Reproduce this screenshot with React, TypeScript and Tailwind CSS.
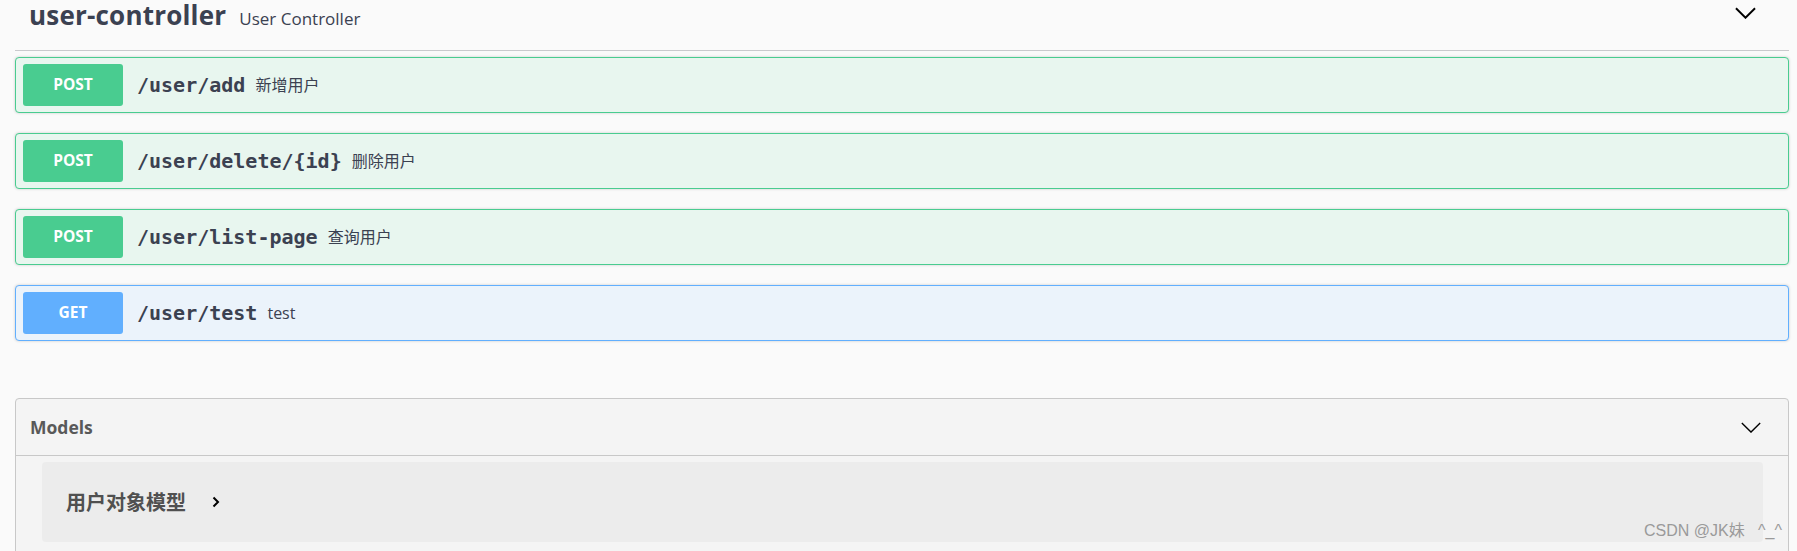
import React from "react";

interface Endpoint {
  method: "POST" | "GET";
  path: string;
  summary: string;
}

const endpoints: Endpoint[] = [
  { method: "POST", path: "/user/add", summary: "新增用户" },
  { method: "POST", path: "/user/delete/{id}", summary: "删除用户" },
  { method: "POST", path: "/user/list-page", summary: "查询用户" },
  { method: "GET", path: "/user/test", summary: "test" },
];

const sans = "font-['Open_Sans','Noto_Sans_CJK_SC',sans-serif]";

const Chevron = ({ className, width = 2 }: { className?: string; width?: number }) => (
  <svg className={className} viewBox="0 0 22 12" fill="none" stroke="currentColor">
    <path d="M1 1l10 10L21 1" strokeWidth={width} />
  </svg>
);

const OpBlock: React.FC<{ op: Endpoint }> = ({ op }) => {
  const isPost = op.method === "POST";
  return (
    <div
      className={`flex items-center h-[56px] rounded-[4px] border pl-[7px] shadow-[0_0_3px_rgba(0,0,0,0.19)] ${
        isPost ? "border-[#49cc90] bg-[#e8f6ef]" : "border-[#61affe] bg-[#ebf3fb]"
      }`}
    >
      <span
        className={`flex items-center justify-center w-[100px] h-[42px] rounded-[3px] text-white font-bold text-[15.5px] ${sans} ${
          isPost ? "bg-[#49cc90]" : "bg-[#61affe]"
        }`}
      >
        {op.method}
      </span>
      <span className="pl-[14px] text-[20px] font-bold text-[#3b4151] font-['DejaVu_Sans_Mono',monospace]">
        {op.path}
      </span>
      <span className={`pl-[10px] text-[16px] text-[#3b4151] ${sans}`}>{op.summary}</span>
    </div>
  );
};

export default function App() {
  return (
    <div className="relative h-[551px] overflow-hidden bg-[#fafafa] pl-[15px] pr-[8px]">
      {/* tag header */}
      <div className="flex items-start justify-between h-[51px] border-b border-[#c9cacd] pl-[14px] pr-[33px]">
        <div className="flex items-baseline gap-[13px] mt-[2px]">
          <span className={`text-[26px] font-bold text-[#3b4151] leading-none tracking-[0.2px] ${sans}`}>
            user-controller
          </span>
          <span className={`text-[17px] text-[#3b4151] leading-none ${sans}`}>User Controller</span>
        </div>
        <Chevron className="mt-[7px] w-[21px] h-[12px] text-black" width={2} />
      </div>

      {/* operations */}
      <div className="flex flex-col gap-[20px] mt-[6px]">
        {endpoints.map((op) => (
          <OpBlock key={op.path} op={op} />
        ))}
      </div>

      {/* models */}
      <div className="mt-[57px] rounded-[4px] border border-[#c8c8c8] bg-[#f4f4f4] pb-[40px]">
        <div className="flex items-center justify-between h-[57px] border-b border-[#c8c8c8] pl-[14px] pr-[26px]">
          <span className={`text-[17.5px] font-bold text-[#595959] ${sans}`}>Models</span>
          <Chevron className="w-[22px] h-[11px] text-black" width={1.5} />
        </div>
        <div className="pt-[6px] pl-[26px] pr-[25px]">
          <div className="flex items-center h-[80px] rounded-[4px] bg-[#ececec] pl-[24px]">
            <span className="text-[20px] font-bold text-[#505050] font-['Noto_Sans_CJK_SC',sans-serif]">
              用户对象模型
            </span>
            <svg className="ml-[26px] w-[8px] h-[12px]" viewBox="0 0 8 12" fill="none" stroke="black">
              <path d="M1.5 1.5L6 6l-4.5 4.5" strokeWidth={2} />
            </svg>
          </div>
        </div>
      </div>

      <div className="absolute right-[15px] bottom-[8px] text-[16px] text-[#9a9a9a] font-['Liberation_Sans','Noto_Sans_CJK_SC',sans-serif]">
        CSDN @JK妹&nbsp;&nbsp;&nbsp;^_^
      </div>
    </div>
  );
}
